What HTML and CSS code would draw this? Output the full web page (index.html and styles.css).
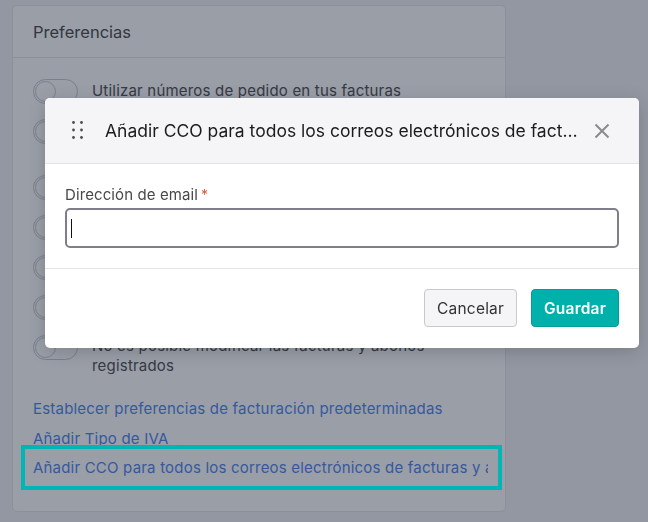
FILE: index.html
```html
<!DOCTYPE html>
<html lang="es">
<head>
  <meta charset="UTF-8" />
  <meta name="viewport" content="width=device-width, initial-scale=1.0"/>
  <title>Preferencias de facturación</title>
  <link rel="stylesheet" href="styles.css">
</head>
<body>

  <!-- Preferences card -->
  <div class="card">
    <div class="card-header">Preferencias</div>
    <div class="card-body">
      <ul class="pref-list">
        <li class="pref"><span class="toggle"></span><span class="pref-text">Utilizar números de pedido en tus facturas</span></li>
        <li class="pref"><span class="toggle"></span><span class="pref-text">Mostrar la fecha de vencimiento en las facturas y en los abonos enviados</span></li>
        <li class="pref"><span class="toggle"></span><span class="pref-text">Incluir el PDF adjunto en los correos</span></li>
        <li class="pref"><span class="toggle"></span><span class="pref-text">Enviar recordatorios de pago</span></li>
        <li class="pref"><span class="toggle"></span><span class="pref-text">Mostrar los datos bancarios</span></li>
        <li class="pref"><span class="toggle"></span><span class="pref-text">Redondear los importes totales</span></li>
        <li class="pref"><span class="toggle"></span><span class="pref-text">No es posible modificar las facturas y abonos registrados</span></li>
      </ul>

      <div class="links">
        <a href="#" class="link">Establecer preferencias de facturación predeterminadas</a>
        <a href="#" class="link">Añadir Tipo de IVA</a>
        <div class="highlight">
          <a href="#" class="link">Añadir CCO para todos los correos electrónicos de facturas y abonos</a>
        </div>
      </div>
    </div>
  </div>

  <!-- Dim overlay -->
  <div class="overlay"></div>

  <!-- Modal -->
  <div class="modal">
    <div class="modal-header">
      <svg class="handle" width="11" height="19" viewBox="0 0 11 19">
        <circle cx="1.5" cy="1.5" r="1.4"/><circle cx="9.5" cy="1.5" r="1.4"/>
        <circle cx="1.5" cy="9" r="1.4"/><circle cx="9.5" cy="9" r="1.4"/>
        <circle cx="1.5" cy="16.5" r="1.4"/><circle cx="9.5" cy="16.5" r="1.4"/>
      </svg>
      <h3 class="modal-title">Añadir CCO para todos los correos electrónicos de facturas y abonos</h3>
      <button class="close" aria-label="Cerrar">
        <svg width="16" height="16" viewBox="0 0 16 16"><path d="M1.5 1.5 L14.5 14.5 M14.5 1.5 L1.5 14.5"/></svg>
      </button>
    </div>

    <div class="modal-body">
      <label class="field-label">Dirección de email<span class="req">*</span></label>
      <div class="field-input"><span class="caret"></span></div>
    </div>

    <div class="modal-footer">
      <button class="btn btn-cancel">Cancelar</button>
      <button class="btn btn-save">Guardar</button>
    </div>
  </div>

</body>
</html>
```

FILE: styles.css
```css
body {
  font-family: Inter, "Noto Sans", Arial, sans-serif;
  margin: 0;
  padding: 5px 0 0 12px;
  background: #f1f3f5;
  height: 522px;
  box-sizing: border-box;
  overflow: hidden;
}

.card {
  width: 494px;
  background: #ffffff;
  border: 1px solid #e3e5e8;
  border-radius: 5px;
  box-sizing: border-box;
}

.card-header {
  height: 51px;
  padding: 0 20px;
  display: flex;
  align-items: center;
  font-size: 16.5px;
  color: #444;
  border-bottom: 1px solid #e3e5e8;
}

.card-body {
  padding: 21px 17px 33px 20px;
}

.pref-list {
  list-style: none;
  margin: 0;
  padding: 0;
  display: flex;
  flex-direction: column;
  gap: 15px;
}

.pref {
  display: flex;
  align-items: flex-start;
  gap: 14px;
}

.toggle {
  flex: none;
  width: 45px;
  height: 25px;
  box-sizing: border-box;
  border: 1px solid #c4c7cc;
  border-radius: 13px;
  background: #fff;
  position: relative;
}

.toggle::before {
  content: "";
  position: absolute;
  left: 1px;
  top: 1px;
  width: 21px;
  height: 21px;
  box-sizing: border-box;
  border: 1px solid #c4c7cc;
  border-radius: 50%;
}

.pref-text {
  font-size: 15px;
  letter-spacing: 0.2px;
  line-height: 19.5px;
  padding-top: 1.5px;
  color: #4a4a4a;
}

.links {
  display: flex;
  flex-direction: column;
  gap: 9.5px;
  margin-top: 24px;
}

.link {
  display: block;
  font-size: 15px;
  letter-spacing: 0.2px;
  line-height: 20px;
  color: #4a82ee;
  text-decoration: none;
  white-space: nowrap;
  overflow: hidden;
}

.highlight {
  position: relative;
}

.highlight .link {
  width: 455px;
}

/* annotation box drawn above the dimming layer */
.highlight::after {
  content: "";
  position: absolute;
  left: -12px;
  right: -14px;
  top: -13px;
  bottom: -12px;
  border: 4px solid #00b5b5;
  z-index: 20;
}

.overlay {
  position: fixed;
  inset: 0;
  background: rgba(30, 41, 59, 0.45);
  z-index: 10;
}

.modal {
  position: fixed;
  left: 45px;
  top: 98px;
  width: 594px;
  background: #fff;
  border-radius: 5px;
  box-shadow: 0 4px 18px rgba(0, 0, 0, 0.18);
  z-index: 30;
  overflow: hidden;
}

.modal-header {
  height: 66px;
  box-sizing: border-box;
  background: #f5f5f7;
  border-bottom: 1px solid #e4e4e7;
  display: flex;
  align-items: center;
  padding: 0 29px 0 27px;
  gap: 12px;
}

.handle {
  flex: none;
  fill: #4d4d4d;
  margin-right: 10px;
}

.modal-title {
  flex: 1;
  margin: 0;
  font-size: 17.5px;
  letter-spacing: 0;
  font-weight: 400;
  color: #1c1c1c;
  white-space: nowrap;
  overflow: hidden;
  text-overflow: ellipsis;
}

.close {
  flex: none;
  background: none;
  border: none;
  padding: 0;
  width: 16px;
  height: 16px;
  cursor: pointer;
}

.close path {
  stroke: #8b8b8e;
  stroke-width: 2;
  fill: none;
}

.modal-body {
  padding: 21px 20px 20px 20px;
  border-bottom: 1px solid #e4e4e7;
}

.field-label {
  display: block;
  font-size: 15px;
  letter-spacing: 0.1px;
  line-height: 20px;
  color: #484848;
  margin-bottom: 3px;
}

.req {
  color: #e5533d;
  font-size: 14px;
  margin-left: 3px;
}

.field-input {
  height: 40px;
  box-sizing: border-box;
  border: 2px solid #807e8a;
  border-radius: 5px;
  display: flex;
  align-items: center;
  padding-left: 4px;
}

.caret {
  width: 1px;
  height: 19px;
  background: #111;
}

.modal-footer {
  display: flex;
  justify-content: flex-end;
  gap: 14px;
  padding: 20px 20px 21px;
}

.btn {
  height: 38px;
  border-radius: 4px;
  font-family: inherit;
  font-size: 15.5px;
  letter-spacing: 0.2px;
  cursor: pointer;
}

.btn-cancel {
  padding: 0 12px;
  background: #f5f5f7;
  border: 1px solid #c9c9cd;
  color: #333;
}

.btn-save {
  padding: 0 12px;
  background: #00b1ab;
  border: 1px solid #009c97;
  color: #fff;
  font-weight: 600;
}
```
